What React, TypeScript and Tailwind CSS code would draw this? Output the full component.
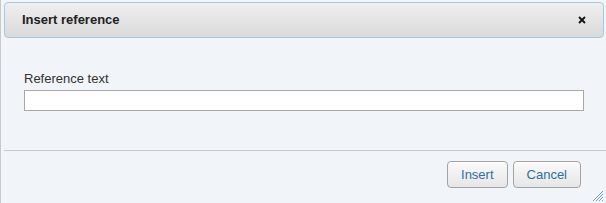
import React from "react";

export default function App() {
	return (
		<div
			className="relative flex h-[203px] w-[606px] flex-col overflow-hidden border-l border-[#c9c9c9] bg-[#f1f4f8] text-[13px] text-[#333333]"
			style={{ fontFamily: '"Liberation Sans", Arial, sans-serif' }}
		>
			{/* Title bar */}
			<div className="ml-[3px] mr-[2px] mt-[2px] flex h-[36px] items-center justify-between rounded-[4px] border border-[#a6c9e2] bg-gradient-to-b from-[#efefef] to-[#dadada] pl-[17px] pr-[13px]">
				<span className="font-bold text-[#222222]">Insert reference</span>
				<button className="flex h-4 w-4 items-center justify-center">
					<svg width="8" height="8" viewBox="0 0 8 8">
						<path d="M1 1 L7 7 M7 1 L1 7" stroke="#111" strokeWidth="1.8" />
					</svg>
				</button>
			</div>

			{/* Content */}
			<div className="flex flex-1 flex-col pl-[23px] pr-[22px] pt-[33px]">
				<label className="block leading-[16px]">Reference text</label>
				<input
					type="text"
					className="mt-[3px] h-[21px] w-full border border-[#a9a9a9] bg-white outline-none"
				/>
			</div>

			{/* Button pane */}
			<div className="ml-[3px] flex h-[53px] items-start justify-end gap-[5px] border-t border-[#c5c9cd] pr-[25px] pt-[10px]">
				<button className="h-[27px] rounded-[4px] border border-[#a3a3a3] bg-gradient-to-b from-[#fafafa] to-[#e6e6e6] px-[13px] text-[#2e6e9e] shadow-[inset_0_1px_0_#fff]">
					Insert
				</button>
				<button className="h-[27px] rounded-[4px] border border-[#a3a3a3] bg-gradient-to-b from-[#fafafa] to-[#e6e6e6] px-[13px] text-[#2e6e9e] shadow-[inset_0_1px_0_#fff]">
					Cancel
				</button>
			</div>

			{/* Resize handle */}
			<svg className="absolute bottom-[1px] right-[2px]" width="12" height="12" viewBox="0 0 12 12">
				<path d="M11 1 L1 11 M11 4 L4 11 M11 7 L7 11 M11 10 L10 11" stroke="#6f9ccf" strokeWidth="1" />
			</svg>
		</div>
	);
}
